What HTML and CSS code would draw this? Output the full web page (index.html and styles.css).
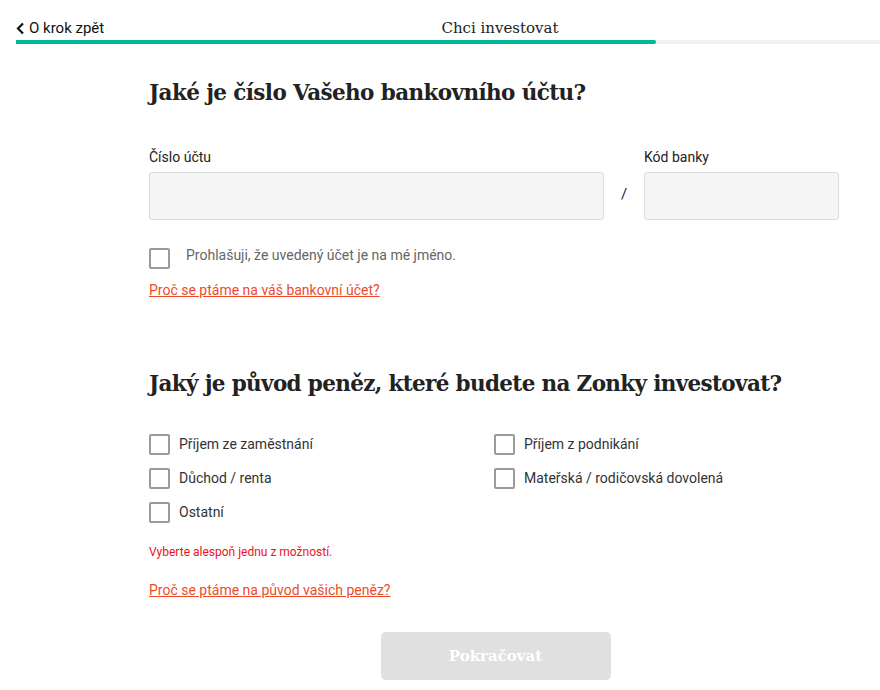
FILE: index.html
```html
<!DOCTYPE html>
<html lang="cs">
<head>
  <meta charset="utf-8">
  <title>Chci investovat</title>
  <link rel="stylesheet" href="styles.css">
</head>
<body>
  <div class="topbar">
    <div class="topbar-row">
      <a class="back" href="#">
        <svg width="9" height="13" viewBox="0 0 9 13"><path d="M7 1.5 2 6.5l5 5" fill="none" stroke="#111" stroke-width="2.2"/></svg>
        O krok zpět
      </a>
      <div class="title">Chci investovat</div>
    </div>
    <div class="progress-track">
      <div class="progress" style="width: 74.1%"></div>
    </div>
  </div>

  <div class="content">
    <h1>Jaké je číslo Vašeho bankovního účtu?</h1>

    <div class="account-row">
      <div class="field field-number">
        <label>Číslo účtu</label>
        <input type="text">
      </div>
      <div class="slash">/</div>
      <div class="field field-bank">
        <label>Kód banky</label>
        <input type="text">
      </div>
    </div>

    <label class="check check-owner">
      <span class="box"></span>
      <span>Prohlašuji, že uvedený účet je na mé jméno.</span>
    </label>
    <a class="why" href="#">Proč se ptáme na váš bankovní účet?</a>

    <h1 class="second">Jaký je původ peněz, které budete na Zonky investovat?</h1>

    <div class="options">
      <label class="check"><span class="box"></span><span>Příjem ze zaměstnání</span></label>
      <label class="check"><span class="box"></span><span>Příjem z podnikání</span></label>
      <label class="check"><span class="box"></span><span>Důchod / renta</span></label>
      <label class="check"><span class="box"></span><span>Mateřská / rodičovská dovolená</span></label>
      <label class="check"><span class="box"></span><span>Ostatní</span></label>
    </div>

    <p class="error">Vyberte alespoň jednu z možností.</p>
    <a class="why" href="#">Proč se ptáme na původ vašich peněz?</a>

    <div class="actions">
      <button class="continue" disabled>Pokračovat</button>
    </div>
  </div>
</body>
</html>
```

FILE: styles.css
```css
body {
  margin: 0;
  padding: 0;
  background-color: #fff;
  font-family: Roboto, "Liberation Sans", sans-serif;
  color: #222;
}
.topbar {
  padding: 18px 0 0 16px;
}
.topbar-row {
  display: flex;
  align-items: center;
  height: 20px;
}
.back {
  display: flex;
  align-items: center;
  gap: 4px;
  width: 360px;
  font-size: 15px;
  color: #111;
  text-decoration: none;
}
.title {
  width: 248px;
  text-align: center;
  font-family: "DejaVu Serif", serif;
  font-size: 15px;
  color: #222;
}
.progress-track {
  margin-top: 2px;
  height: 4px;
  background-color: #f0f0f0;
}
.progress {
  height: 100%;
  background-color: #00b899;
  border-radius: 0 2px 2px 0;
}
.content {
  width: 690px;
  margin: 0 0 0 149px;
}
h1 {
  margin: 35px 0 0;
  font-family: "DejaVu Serif", serif;
  font-size: 21.5px;
  letter-spacing: -0.6px;
  font-weight: bold;
  color: #222;
  line-height: 28px;
}
h1.second {
  margin-top: 71px;
  letter-spacing: -0.65px;
}
.account-row {
  display: flex;
  align-items: flex-end;
  margin-top: 42px;
}
.field label {
  display: block;
  font-size: 14px;
  color: #222;
  margin-bottom: 7px;
}
.field input {
  box-sizing: border-box;
  width: 100%;
  height: 48px;
  background-color: #f5f5f5;
  border: 1px solid #dcdcdc;
  border-radius: 3px;
}
.field-number {
  width: 455px;
}
.field-bank {
  width: 195px;
}
.slash {
  width: 40px;
  height: 48px;
  line-height: 44px;
  text-align: center;
  font-size: 15px;
}
.check {
  display: flex;
  align-items: center;
  font-size: 14px;
  color: #333;
  height: 22px;
}
.box {
  box-sizing: border-box;
  width: 21px;
  height: 21px;
  border: 2px solid #9a9a9a;
  border-radius: 2px;
  margin-right: 9px;
  flex-shrink: 0;
}
.check-owner {
  margin-top: 27px;
  align-items: flex-start;
  color: #666;
}
.check-owner .box {
  margin-right: 16px;
  margin-top: 1px;
}
.why {
  display: inline-block;
  font-size: 14px;
  color: #ee4b2b;
  margin-top: 13px;
}
.options {
  display: grid;
  grid-template-columns: 345px 345px;
  row-gap: 12px;
  margin-top: 35px;
}
.error {
  margin: 22px 0 0;
  font-size: 12px;
  color: #e8141e;
}
.error + .why {
  margin-top: 23px;
}
.actions {
  display: flex;
  justify-content: center;
  margin: 33px 0 0 3px;
}
.continue {
  width: 230px;
  height: 48px;
  border: none;
  border-radius: 5px;
  background-color: #e0e0e0;
  color: #fff;
  font-family: "DejaVu Serif", serif;
  font-weight: bold;
  font-size: 15px;
}
```
